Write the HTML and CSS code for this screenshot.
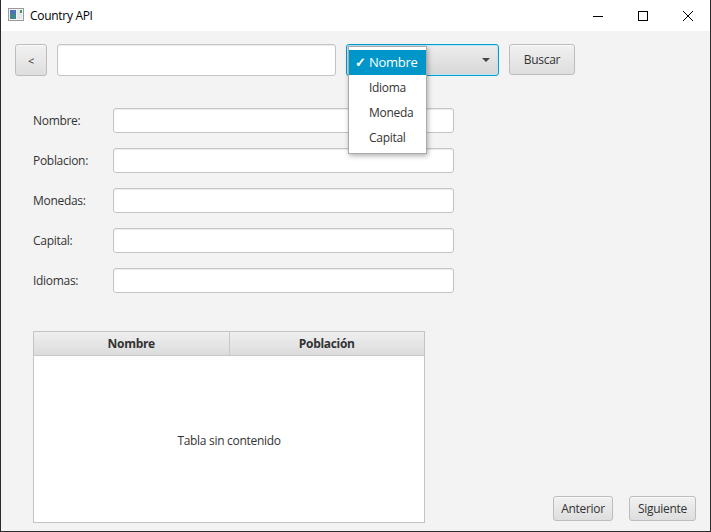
FILE: index.html
```html
<!DOCTYPE html>
<html>
<head>
<meta charset="utf-8">
<link rel="stylesheet" href="styles.css">
</head>
<body>
<div class="window">
  <div class="titlebar">
    <svg class="app-icon" width="16" height="16" viewBox="0 0 16 16">
      <rect x="0.5" y="1.5" width="15" height="12" fill="#f4f4f4" stroke="#9a9a9a"/>
      <rect x="2" y="3" width="6" height="9" fill="#3d8a8a"/>
      <rect x="2" y="3" width="6" height="4" fill="#4c72b8"/>
      <rect x="9" y="3" width="5" height="9" fill="#e6e6e6"/>
      <rect x="12" y="3" width="2" height="3" fill="#3d9a6a"/>
    </svg>
    <span class="title">Country API</span>
    <div class="controls">
      <span class="ctl"><svg width="10" height="10" viewBox="0 0 10 10"><path d="M0 5.5H10" stroke="#000" stroke-width="1"/></svg></span>
      <span class="ctl"><svg width="10" height="10" viewBox="0 0 10 10"><rect x="0.5" y="0.5" width="9" height="9" fill="none" stroke="#000"/></svg></span>
      <span class="ctl"><svg width="10" height="10" viewBox="0 0 10 10"><path d="M0 0L10 10M10 0L0 10" stroke="#000" stroke-width="1"/></svg></span>
    </div>
  </div>
  <div class="content">
    <div class="toolbar">
      <button class="btn back">&lt;</button>
      <div class="field search"></div>
      <div class="combo">
        <span class="arrow"></span>
        <div class="popup">
          <div class="item selected"><span class="check">✓</span>Nombre</div>
          <div class="item">Idioma</div>
          <div class="item">Moneda</div>
          <div class="item">Capital</div>
        </div>
      </div>
      <button class="btn buscar">Buscar</button>
    </div>
    <div class="form">
      <div class="row"><label>Nombre:</label><div class="field"></div></div>
      <div class="row"><label>Poblacion:</label><div class="field"></div></div>
      <div class="row"><label>Monedas:</label><div class="field"></div></div>
      <div class="row"><label>Capital:</label><div class="field"></div></div>
      <div class="row"><label>Idiomas:</label><div class="field"></div></div>
    </div>
    <div class="bottom">
      <div class="table">
        <div class="thead">
          <div class="th">Nombre</div>
          <div class="th">Población</div>
        </div>
        <div class="tbody">Tabla sin contenido</div>
      </div>
      <div class="nav">
        <button class="btn anterior">Anterior</button>
        <button class="btn siguiente">Siguiente</button>
      </div>
    </div>
  </div>
</div>
</body>
</html>
```

FILE: styles.css
```css
* { box-sizing: border-box; }
html, body { margin: 0; padding: 0; }
body {
  width: 711px;
  height: 532px;
  overflow: hidden;
  font-family: "Open Sans", "Noto Sans", sans-serif;
  font-size: 12px;
  letter-spacing: -0.3px;
  color: #333;
  background: #fff;
}
.window {
  width: 711px;
  height: 532px;
  border-left: 1px solid #2b2b2b;
  border-right: 1px solid #2b2b2b;
  border-bottom: 1px solid #2b2b2b;
  display: flex;
  flex-direction: column;
}
.titlebar {
  height: 31px;
  background: #fff;
  display: flex;
  align-items: center;
  padding-left: 7px;
  flex: none;
}
.app-icon { margin-top: -1px; }
.title {
  margin-left: 6px;
  color: #000;
  font-size: 12px;
  margin-top: -1px;
}
.controls {
  margin-left: auto;
  display: flex;
  height: 31px;
}
.ctl {
  width: 45px;
  height: 31px;
  display: flex;
  align-items: center;
  justify-content: center;
}
.content {
  flex: 1;
  background: #f3f3f3;
  padding: 13px 14px 0 14px;
  display: flex;
  flex-direction: column;
}
.toolbar {
  display: flex;
  gap: 10px;
  height: 31px;
  flex: none;
}
.btn {
  font-family: inherit;
  font-size: 12px;
  letter-spacing: -0.3px;
  color: #333;
  border: 1px solid #bdbdbd;
  border-radius: 3px;
  background: linear-gradient(#f1f1f1, #dedede);
  box-shadow: inset 0 1px 0 #fafafa;
  padding: 0;
  margin: 0;
}
.back { width: 32px; height: 32px; font-size: 11px; }
.buscar { width: 66px; height: 31px; }
.field {
  background: #fff;
  border: 1px solid #c4c4c4;
  border-radius: 3px;
  box-shadow: inset 0 1px 1px #ececec;
}
.search { width: 279px; height: 32px; }
.combo {
  position: relative;
  width: 153px;
  height: 32px;
  border: 1px solid #039ed3;
  border-radius: 3px;
  background: linear-gradient(#eeeeee, #d6d6d6);
  box-shadow: inset 0 0 0 1px #bfe5f3;
}
.arrow {
  position: absolute;
  right: 8px;
  top: 13px;
  width: 0;
  height: 0;
  border-left: 4px solid transparent;
  border-right: 4px solid transparent;
  border-top: 4px solid #444;
}
.popup {
  position: absolute;
  left: 1px;
  top: 1px;
  width: 79px;
  height: 108px;
  background: #fff;
  border: 1px solid #aaa;
  box-shadow: 1px 2px 5px rgba(0,0,0,0.3);
  padding-top: 3px;
  z-index: 5;
}
.item {
  height: 25px;
  line-height: 25px;
  padding-left: 20px;
  color: #333;
  font-size: 12px;
}
.item.selected {
  background: #0096c9;
  color: #fff;
  padding-left: 6px;
  font-size: 13px;
}
.check {
  font-weight: bold;
  display: inline-block;
  width: 14px;
  font-size: 13px;
}
.form {
  margin-top: 33px;
  display: flex;
  flex-direction: column;
  gap: 15px;
  padding-left: 18px;
  flex: none;
}
.row {
  display: flex;
  align-items: center;
  height: 25px;
}
.row label {
  width: 80px;
  font-size: 12px;
  color: #333;
}
.row .field {
  width: 341px;
  height: 25px;
}
.bottom {
  margin-top: 38px;
  padding-left: 18px;
  display: flex;
  align-items: flex-end;
  justify-content: space-between;
  padding-bottom: 8px;
}
.table {
  width: 392px;
  height: 192px;
  border: 1px solid #c4c4c4;
  background: #fff;
  display: flex;
  flex-direction: column;
}
.thead {
  display: flex;
  height: 24px;
  background: linear-gradient(#efefef, #dcdcdc);
  border-bottom: 1px solid #c8c8c8;
  flex: none;
}
.th {
  flex: 1;
  text-align: center;
  line-height: 23px;
  font-weight: bold;
  font-size: 12px;
  color: #333;
}
.th + .th { border-left: 1px solid #c8c8c8; }
.tbody {
  flex: 1;
  display: flex;
  align-items: center;
  justify-content: center;
  color: #333;
  padding-top: 2px;
}
.nav {
  display: flex;
  gap: 16px;
  padding-bottom: 2px;
}
.anterior { width: 60px; height: 25px; }
.siguiente { width: 67px; height: 25px; }
```
